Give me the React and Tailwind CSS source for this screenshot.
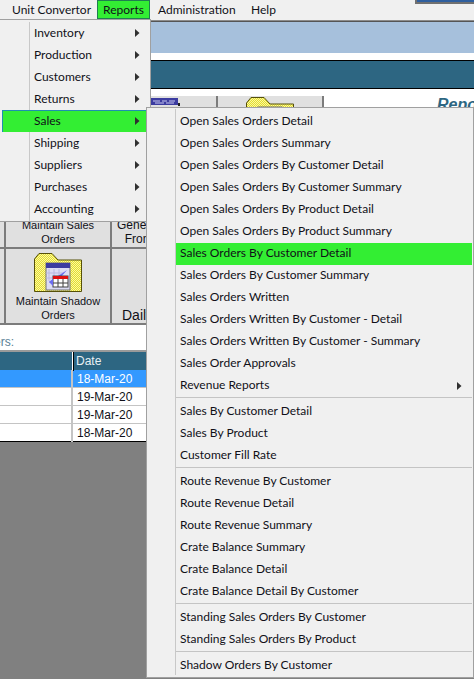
import React from "react";

const menuFont = "font-['Lato','Noto_Sans',sans-serif] text-[12px] text-[#101018]";

const LEFT_ITEMS = [
  "Inventory",
  "Production",
  "Customers",
  "Returns",
  "Sales",
  "Shipping",
  "Suppliers",
  "Purchases",
  "Accounting",
];

const SALES_GROUPS = [
  [
    "Open Sales Orders Detail",
    "Open Sales Orders Summary",
    "Open Sales Orders By Customer Detail",
    "Open Sales Orders By Customer Summary",
    "Open Sales Orders By Product Detail",
    "Open Sales Orders By Product Summary",
    "Sales Orders By Customer Detail",
    "Sales Orders By Customer Summary",
    "Sales Orders Written",
    "Sales Orders Written By Customer - Detail",
    "Sales Orders Written By Customer - Summary",
    "Sales Order Approvals",
    "Revenue Reports",
  ],
  ["Sales By Customer Detail", "Sales By Product", "Customer Fill Rate"],
  [
    "Route Revenue By Customer",
    "Route Revenue Detail",
    "Route Revenue Summary",
    "Crate Balance Summary",
    "Crate Balance Detail",
    "Crate Balance Detail By Customer",
  ],
  ["Standing Sales Orders By Customer", "Standing Sales Orders By Product"],
  ["Shadow Orders By Customer"],
];

function Arrow() {
  return (
    <svg width="5" height="8" viewBox="0 0 5 8" className="shrink-0">
      <path d="M0 0 L4.5 4 L0 8 Z" fill="#303030" />
    </svg>
  );
}

function FolderIcon({ id }) {
  return (
    <svg width="48" height="40" viewBox="0 0 48 40">
      <defs>
        <pattern id={id} width="2" height="2" patternUnits="userSpaceOnUse">
          <rect width="2" height="2" fill="#fbf9a0" />
          <rect width="1" height="1" fill="#e4dc30" />
          <rect x="1" y="1" width="1" height="1" fill="#e4dc30" />
        </pattern>
      </defs>
      <path d="M0.5 6 L5 0.5 H18 L24 7 H47.5 V38.5 H0.5 Z" fill={`url(#${id})`} stroke="#55500a" />
      <rect x="12" y="10" width="24" height="27" fill="#dcdcf4" stroke="#707070" />
      <rect x="12" y="10" width="24" height="5" fill="#3c3ca0" />
      <path d="M15 16 V28 M20 16 V24 M25 16 V22 M12 20 H30 M12 25 H18" stroke="#b8b8e0" />
      <path d="M15 29 L33 17 L27 24 L22 33 Z" fill="#6c6cf0" />
      <rect x="19" y="23" width="15" height="11" fill="#ffffff" stroke="#404040" />
      <rect x="19" y="23" width="15" height="3" fill="#e01010" />
      <path d="M24 26 V34 M29 26 V34 M19 30 H34" stroke="#404040" />
      <path d="M15 29 L19 26 V33 Z" fill="#6c6cf0" />
    </svg>
  );
}

function ToolCell({ children, lines, labelClass = "text-[11px]" }) {
  return (
    <div className="flex flex-col items-center overflow-hidden border-r-2 border-b-2 border-[#7c7c7c] bg-[#e0e0e0]">
      {children}
      {lines && (
        <div className={`mt-auto mb-px w-full text-center font-['Liberation_Sans',sans-serif] leading-[14px] whitespace-nowrap text-[#101018] ${labelClass}`}>
          {lines.map((l) => (
            <div key={l}>{l}</div>
          ))}
        </div>
      )}
    </div>
  );
}

function Toolbar() {
  return (
    <div className="grid grid-cols-[6px_106px_106px_106px_1fr] grid-rows-[77px_76px_76px]">
      <ToolCell />
      <ToolCell />
      <ToolCell>
        <svg width="30" height="9" viewBox="0 0 30 9" className="mt-[2px] ml-[2px]">
          <rect width="28" height="7" fill="#3c3ca0" />
          <path d="M3 3 H10 M12 3 H17 M19 3 H25 M5 5 H14 M16 5 H24" stroke="#c8c8f0" />
          <rect x="28" y="5" width="2" height="3" fill="#222222" />
        </svg>
      </ToolCell>
      <ToolCell>
        <div className="mt-px">
          <FolderIcon id="dither-a" />
        </div>
      </ToolCell>
      <div className="row-span-3 overflow-hidden bg-white pl-[113px] font-['Liberation_Sans',sans-serif] text-[16px] leading-[18px] font-bold whitespace-nowrap text-[#2d6682] italic">
        Reports
      </div>

      <ToolCell />
      <ToolCell lines={["Maintain Sales", "Orders"]} />
      <ToolCell lines={["Generate Orders", "From Shadow"]} labelClass="pr-[4px] text-[12px]" />
      <ToolCell />

      <ToolCell />
      <ToolCell lines={["Maintain Shadow", "Orders"]}>
        <div className="mt-[4px]">
          <FolderIcon id="dither-c" />
        </div>
      </ToolCell>
      <ToolCell lines={["Daily Reports"]} labelClass="text-[14px]" />
      <ToolCell />
    </div>
  );
}

function DateTable() {
  const rows = ["18-Mar-20", "19-Mar-20", "19-Mar-20", "18-Mar-20"];
  return (
    <div className="border-t-2 border-b border-t-[#9a9a9a] border-b-black bg-white font-['Liberation_Sans',sans-serif] text-[12px]">
      <div className="grid h-[18px] grid-cols-[73px_1fr] bg-[#2d6682] leading-[19px] text-[#e8f0f4]">
        <div className="border-r border-r-white shadow-[1px_0_0_#000]" />
        <div className="pl-[3px]">Date</div>
      </div>
      {rows.map((d, i) => (
        <div
          key={i}
          className={`grid h-[18px] grid-cols-[73px_1fr] border-b border-[#c4c4c4] leading-[18px] last:h-[17px] last:border-b-0 ${
            i === 0 ? "bg-[#3399ff] text-white" : "text-[#101018]"
          }`}
        >
          <div className="border-r-2 border-[#c4c4c4]" />
          <div className="pl-[4px]">{d}</div>
        </div>
      ))}
    </div>
  );
}

function LeftMenu() {
  return (
    <div className={`absolute top-[19px] left-0 w-[151px] border-t border-r border-b border-[#a0a0a0] bg-[#f0f0f0] pt-[2px] pb-px ${menuFont}`}>
      <div className="absolute top-[2px] bottom-0 left-[29px] w-px bg-[#c8c8c8]" />
      {LEFT_ITEMS.map((item) => (
        <div
          key={item}
          className={`relative flex h-[22px] items-center justify-between pr-[10px] ${
            item === "Sales" ? "ml-[2px] border-t border-l border-[#1f8fb0] bg-[#33ee33] pb-px pl-[31px]" : "pl-[34px]"
          }`}
        >
          <span>{item}</span>
          <Arrow />
        </div>
      ))}
    </div>
  );
}

function SalesMenu() {
  return (
    <div className={`absolute top-[107px] left-[146px] w-[328px] border border-[#a0a0a0] bg-[#f0f0f0] pt-[3px] ${menuFont}`}>
      <div className="absolute top-[1px] bottom-[2px] left-[28px] w-px bg-[#c8c8c8]" />
      {SALES_GROUPS.map((group, g) => (
        <div key={g} className={g > 0 ? "mr-[1px] ml-[29px] border-t border-[#c4c4c4] pt-[3px]" : ""}>
          {group.map((item) => (
            <div
              key={item}
              className={`relative flex h-[22px] items-center justify-between pr-[10px] pl-[4px] ${
                g === 0 ? "mr-px ml-[29px]" : ""
              } ${item === "Sales Orders By Customer Detail" && g === 0 ? "bg-[#33ee33]" : ""}`}
            >
              <span className="relative -top-px">{item}</span>
              {item === "Revenue Reports" && <Arrow />}
            </div>
          ))}
        </div>
      ))}
    </div>
  );
}

export default function App() {
  return (
    <div className="relative h-[679px] w-[474px] overflow-hidden bg-[#808080]">
      <div className="absolute top-0 right-0 h-[4px] w-[59px] border-b-2 border-l-2 border-b-[#707070] border-l-[#707070] bg-[#2f5f9f]" />

      <div className={`flex h-[20px] items-center bg-[#f0f0f0] ${menuFont}`}>
        <span className="ml-[12px] w-[85px]">Unit Convertor</span>
        <span className="flex h-[19px] w-[53px] items-center justify-center self-start border border-[#1f7f50] bg-[#33ee33]">Reports</span>
        <span className="ml-[8px] w-[93px]">Administration</span>
        <span>Help</span>
      </div>
      <div className="h-[2px] border-t border-t-[#8c8c8c] bg-[#555555]" />
      <div className="h-[31px] bg-[#a6c0dc]" />
      <div className="h-[7px] bg-white" />
      <div className="h-[29px] border-y border-black bg-[#2d6682]" />
      <div className="h-[7px] bg-white" />

      <Toolbar />

      <div className="flex h-[25px] items-end justify-start bg-white">
        <div className="flex w-[14px] justify-end overflow-hidden font-['Liberation_Sans',sans-serif] text-[12px] leading-[15px] whitespace-nowrap text-[#5a7f96]">
          <span className="shrink-0">Orders:</span>
        </div>
      </div>

      <DateTable />

      <LeftMenu />
      <SalesMenu />
    </div>
  );
}
